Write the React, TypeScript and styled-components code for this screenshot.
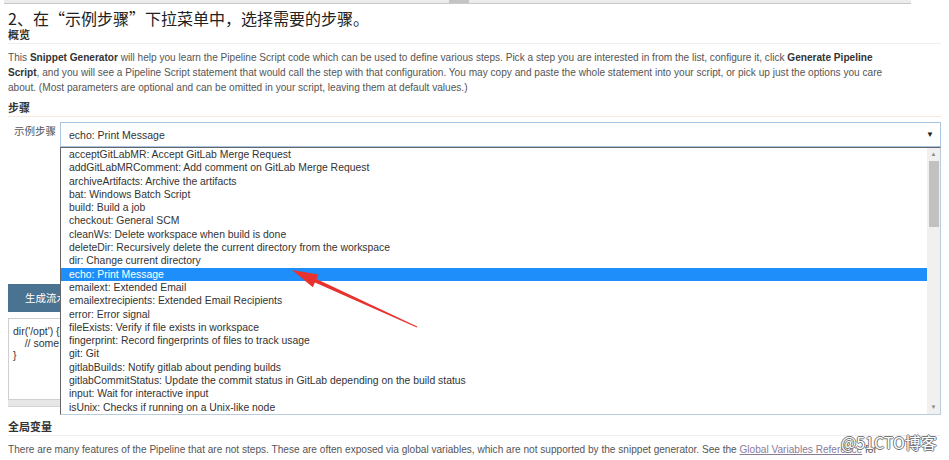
import React from 'react';
import styled, { createGlobalStyle } from 'styled-components';

const GlobalStyle = createGlobalStyle`
  html, body {
    margin: 0;
    padding: 0;
    background: #ffffff;
  }
  body {
    width: 949px;
    height: 460px;
    overflow: hidden;
    font-family: "Liberation Sans", Arial, "Noto Sans CJK SC", sans-serif;
  }
`;

const Page = styled.div`
  position: relative;
  width: 949px;
  height: 460px;
  overflow: hidden;
`;

const TopScroll = styled.div`
  position: relative;
  margin-left: 4px;
  width: 907px;
  height: 3px;
  background: #ececec;
  border-bottom: 1px solid #c9c9c9;
`;

const TopThumb = styled.div`
  position: absolute;
  left: 445px;
  top: 0;
  width: 20px;
  height: 3px;
  background: #c4c4c4;
`;

const Content = styled.div`
  padding: 0 8px;
`;

const Heading = styled.h2`
  margin: 4px 0 0;
  height: 20px;
  line-height: 20px;
  font-size: 16px;
  font-weight: normal;
  color: #222;
  font-family: "Noto Sans CJK SC", "Liberation Sans", sans-serif;
`;

const SectionTitle = styled.div<{ $line: string; $top: number }>`
  margin-top: ${(p) => p.$top}px;
  height: 12px;
  line-height: 12px;
  padding-bottom: 3px;
  border-bottom: 1px solid ${(p) => p.$line};
  font-size: 11px;
  font-weight: bold;
  color: #333;
  font-family: "Noto Sans CJK SC", sans-serif;
`;

const Paragraph = styled.p<{ $top: number }>`
  margin: ${(p) => p.$top}px 0 0;
  font-size: 10.1px;
  line-height: 15px;
  color: #555;
  white-space: nowrap;

  b {
    color: #333;
  }
`;

const Link = styled.span`
  color: #8a7b99;
  text-decoration: underline;
`;

const StepRow = styled.div`
  position: relative;
  display: flex;
  align-items: flex-start;
  margin-top: 5px;
  height: 25px;
`;

const Label = styled.div`
  width: 46px;
  padding-left: 6px;
  padding-top: 2px;
  font-size: 10.5px;
  line-height: 14px;
  color: #555;
  font-family: "Noto Sans CJK SC", sans-serif;
`;

const Select = styled.div`
  flex: 1;
  height: 23px;
  display: flex;
  align-items: center;
  justify-content: space-between;
  padding: 0 6px 0 8px;
  border: 1px solid #a7c6e6;
  font-size: 10.5px;
  color: #333;
`;

const Caret = styled.span`
  font-size: 8px;
  color: #222;
`;

const ListBox = styled.div`
  position: absolute;
  z-index: 2;
  left: 52px;
  top: 25px;
  width: 879px;
  height: 266px;
  display: flex;
  background: #fff;
  border-top: 1px solid #666;
  border-left: 1px solid #666;
  border-right: 1px solid #b9cddd;
  border-bottom: 1px solid #b9cddd;
`;

const Items = styled.div`
  flex: 1;
`;

const Item = styled.div<{ $active?: boolean }>`
  height: 13.3px;
  line-height: 13.3px;
  padding-left: 8px;
  font-size: 10.4px;
  white-space: nowrap;
  color: ${(p) => (p.$active ? '#fff' : '#333')};
  background: ${(p) => (p.$active ? '#1e8ffa' : 'transparent')};
`;

const ScrollTrack = styled.div`
  width: 13px;
  display: flex;
  flex-direction: column;
  align-items: center;
  background: #f0f0f0;
`;

const ScrollArrow = styled.div`
  height: 13px;
  line-height: 13px;
  font-size: 6px;
  color: #888;
`;

const ScrollThumb = styled.div`
  width: 10px;
  height: 66px;
  background: #c1c1c1;
`;

const Spacer = styled.div`
  flex: 1;
`;

const GenerateButton = styled.div`
  margin-top: 137px;
  width: 150px;
  height: 28px;
  line-height: 28px;
  padding-left: 17px;
  background: #4a7391;
  color: #fff;
  font-size: 10.5px;
  font-family: "Noto Sans CJK SC", sans-serif;
`;

const CodeBox = styled.div`
  margin-top: 6px;
  height: 74px;
  padding: 6px 4px 0;
  border: 1px solid #cfcfcf;
  font-size: 10.5px;
  line-height: 12px;
  color: #333;
  white-space: pre;
`;

const ResizeStrip = styled.div`
  height: 6px;
  background: #e6e6e6;
  border-bottom: 1px solid #d5d5d5;
`;

const Arrow = styled.svg`
  position: absolute;
  left: 0;
  top: 0;
  z-index: 3;
  pointer-events: none;
`;

const Watermark = styled.div`
  position: absolute;
  z-index: 4;
  left: 841px;
  top: 432px;
  font-size: 16px;
  line-height: 20px;
  color: #fff;
  font-family: "Noto Sans CJK SC", sans-serif;
  text-shadow: -1px 0 #777, 1px 0 #777, 0 -1px #777, 0 1px #777;
`;

const steps = [
  'acceptGitLabMR: Accept GitLab Merge Request',
  'addGitLabMRComment: Add comment on GitLab Merge Request',
  'archiveArtifacts: Archive the artifacts',
  'bat: Windows Batch Script',
  'build: Build a job',
  'checkout: General SCM',
  'cleanWs: Delete workspace when build is done',
  'deleteDir: Recursively delete the current directory from the workspace',
  'dir: Change current directory',
  'echo: Print Message',
  'emailext: Extended Email',
  'emailextrecipients: Extended Email Recipients',
  'error: Error signal',
  'fileExists: Verify if file exists in workspace',
  'fingerprint: Record fingerprints of files to track usage',
  'git: Git',
  'gitlabBuilds: Notify gitlab about pending builds',
  'gitlabCommitStatus: Update the commit status in GitLab depending on the build status',
  'input: Wait for interactive input',
  'isUnix: Checks if running on a Unix-like node',
];

export default function App() {
  return (
    <Page>
      <GlobalStyle />
      <TopScroll>
        <TopThumb />
      </TopScroll>
      <Content>
        <Heading>2、在“示例步骤”下拉菜单中，选择需要的步骤。</Heading>
        <SectionTitle $line="#eeeeee" $top={0}>概览</SectionTitle>
        <Paragraph $top={6}>
          This <b>Snippet Generator</b> will help you learn the Pipeline Script code which can be used to define various
          steps. Pick a step you are interested in from the list, configure it, click <b>Generate Pipeline</b>
          <br />
          <b>Script</b>, and you will see a Pipeline Script statement that would call the step with that configuration. You
          may copy and paste the whole statement into your script, or pick up just the options you care
          <br />
          about. (Most parameters are optional and can be omitted in your script, leaving them at default values.)
        </Paragraph>
        <SectionTitle $line="#f3ebe1" $top={6}>步骤</SectionTitle>
        <StepRow>
          <Label>示例步骤</Label>
          <Select>
            <span>echo: Print Message</span>
            <Caret>▼</Caret>
          </Select>
          <ListBox>
            <Items>
              {steps.map((s) => (
                <Item key={s} $active={s.startsWith('echo')}>
                  {s}
                </Item>
              ))}
            </Items>
            <ScrollTrack>
              <ScrollArrow>▲</ScrollArrow>
              <ScrollThumb />
              <Spacer />
              <ScrollArrow>▼</ScrollArrow>
            </ScrollTrack>
          </ListBox>
        </StepRow>
        <GenerateButton>生成流水线脚本</GenerateButton>
        <CodeBox>{"dir('/opt') {\n    // some block\n}"}</CodeBox>
        <ResizeStrip />
        <SectionTitle $line="#eeeeee" $top={13}>全局变量</SectionTitle>
        <Paragraph $top={6}>
          There are many features of the Pipeline that are not steps. These are often exposed via global variables, which
          are not supported by the snippet generator. See the <Link>Global Variables Reference</Link> for
        </Paragraph>
      </Content>
      <Arrow width="949" height="460" viewBox="0 0 949 460">
        <polygon
          points="292,270 318.6,274.4 316.5,279 417.2,326.5 416.8,327.5 314.9,282.6 312.8,287.2"
          fill="#e8322f"
        />
      </Arrow>
      <Watermark>@51CTO博客</Watermark>
    </Page>
  );
}
